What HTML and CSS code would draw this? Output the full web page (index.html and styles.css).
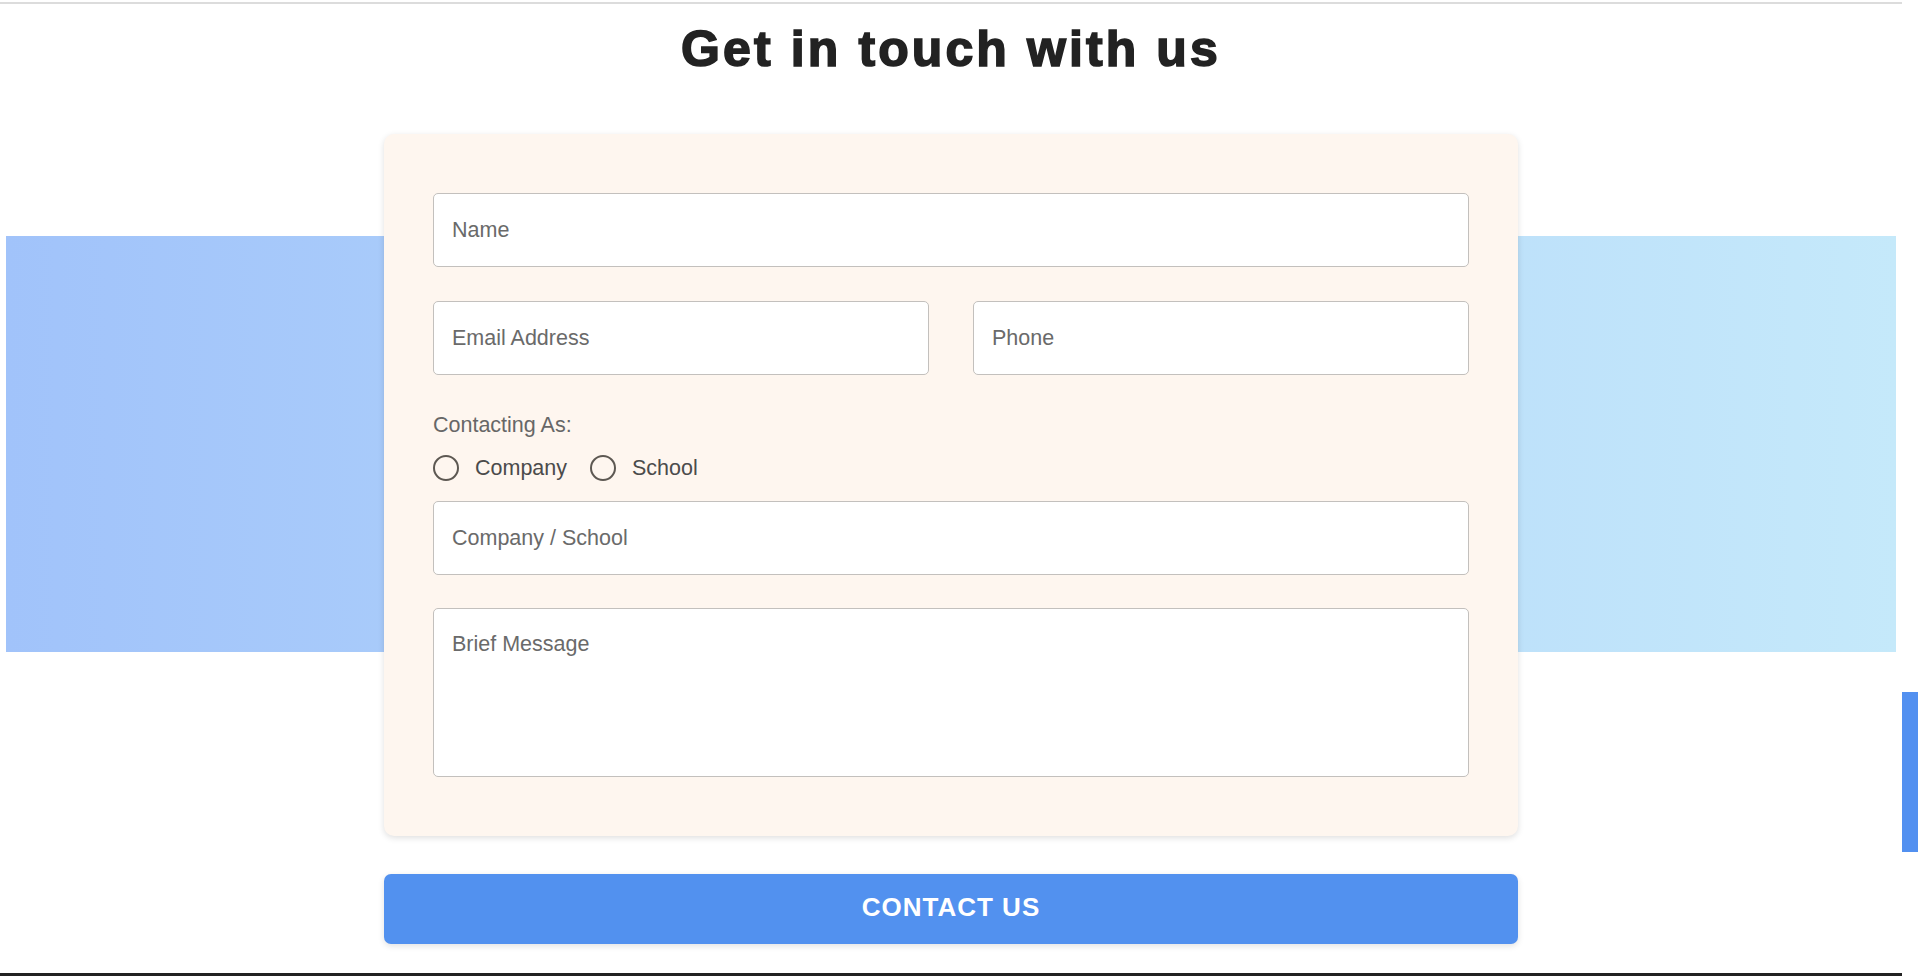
FILE: index.html
```html
<!DOCTYPE html>
<html lang="en">
<head>
<meta charset="utf-8">
<title>Get in touch with us</title>
<link rel="stylesheet" href="styles.css">
</head>
<body>
<div class="page">
  <div class="top-rule"></div>
  <h1 class="title">Get in touch with us</h1>
  <section class="stage">
    <form class="card">
      <input class="field" type="text" placeholder="Name">
      <div class="row">
        <input class="field" type="email" placeholder="Email Address">
        <input class="field" type="tel" placeholder="Phone">
      </div>
      <div class="contact-as">
        <div class="label">Contacting As:</div>
        <div class="radios">
          <label class="radio"><input type="radio" name="as"><span>Company</span></label>
          <label class="radio"><input type="radio" name="as"><span>School</span></label>
        </div>
      </div>
      <input class="field" type="text" placeholder="Company / School">
      <textarea class="field message" placeholder="Brief Message"></textarea>
    </form>
    <button class="submit" type="button">CONTACT US</button>
  </section>
  <footer class="footer"></footer>
</div>
<div class="scrollbar"><div class="thumb"></div></div>
</body>
</html>
```
FILE: styles.css
```css
html, body {
  margin: 0;
  padding: 0;
  height: 100%;
  overflow: hidden;
  background: #fff;
  font-family: "Liberation Sans", Arial, sans-serif;
}

.page {
  width: calc(100% - 16px);
  display: flex;
  flex-direction: column;
}

.top-rule {
  height: 2px;
  margin-top: 2px;
  background: #dcdcdc;
}

.title {
  margin: 16px 0 0;
  font-size: 50px;
  line-height: 58px;
  font-weight: 700;
  letter-spacing: 3.1px;
  text-align: center;
  color: #222;
  -webkit-text-stroke: 1.6px #222;
}

.stage {
  margin-top: 56px;
  display: flex;
  flex-direction: column;
  align-items: center;
  background-image: linear-gradient(90deg, #a1c3fa 0%, #c5e9fa 100%);
  background-repeat: no-repeat;
  background-size: calc(100% - 12px) 416px;
  background-position: 6px 102px;
}

.card {
  box-sizing: border-box;
  width: 1134px;
  padding: 59px 49px 59px;
  background: #fef6ef;
  border-radius: 10px;
  box-shadow: 0 2px 6px rgba(0, 0, 0, 0.13);
  display: flex;
  flex-direction: column;
}

.field {
  box-sizing: border-box;
  display: block;
  width: 100%;
  height: 74px;
  margin: 0;
  padding: 0 18px;
  border: 1px solid #c3c0bd;
  border-radius: 5px;
  background: #fff;
  font-family: "Liberation Sans", Arial, sans-serif;
  font-size: 21.5px;
  color: #333;
  outline: none;
}

.field::placeholder {
  color: #6a6a6a;
  opacity: 1;
}

.row {
  margin-top: 34px;
  display: grid;
  grid-template-columns: 1fr 1fr;
  column-gap: 44px;
}

.contact-as {
  margin-top: 38px;
  margin-bottom: 20px;
}

.label {
  font-size: 21.5px;
  line-height: 25px;
  color: #676767;
}

.radios {
  margin-top: 17px;
  display: flex;
  gap: 23px;
  height: 26px;
  align-items: center;
}

.radio {
  display: flex;
  align-items: center;
  gap: 16px;
  font-size: 21.5px;
  color: #4b4b4b;
}

.radio input {
  -webkit-appearance: none;
  appearance: none;
  box-sizing: border-box;
  width: 26px;
  height: 26px;
  margin: 0;
  border: 2.5px solid #5d5852;
  border-radius: 50%;
  background: transparent;
}

.message {
  margin-top: 33px;
  height: 169px;
  padding: 23px 18px;
  resize: none;
  line-height: normal;
}

.submit {
  margin-top: 38px;
  width: 1134px;
  height: 70px;
  padding: 0 0 4px;
  border: none;
  border-radius: 7px;
  background: #5291ef;
  color: #fff;
  font-family: "Liberation Sans", Arial, sans-serif;
  font-size: 26px;
  font-weight: 700;
  letter-spacing: 1px;
  box-shadow: 0 2px 6px rgba(0, 0, 0, 0.12);
  cursor: pointer;
}

.footer {
  margin-top: 29px;
  height: 200px;
  background: #222;
}

.scrollbar {
  position: fixed;
  top: 0;
  right: 0;
  width: 16px;
  height: 100%;
  background: #fff;
}

.thumb {
  margin-top: 692px;
  height: 160px;
  background: #5290f0;
}
```
